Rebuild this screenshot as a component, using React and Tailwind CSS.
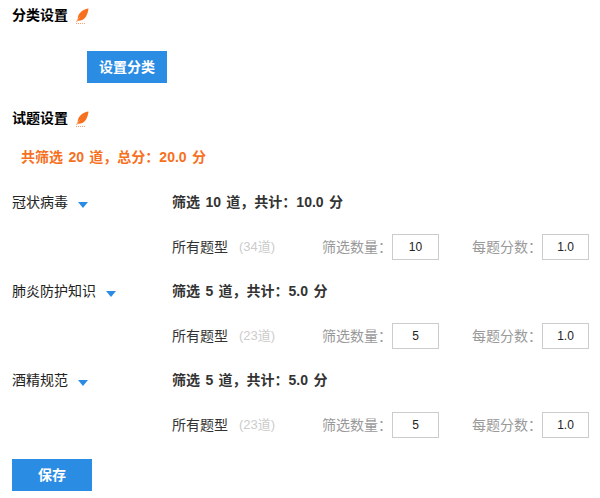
import React from 'react';

const Feather = () => (
  <svg width="14" height="16" viewBox="0 0 14 16" className="ml-[7px] mt-[2px]">
    <path d="M13.5 0.5 C9 1.2 5 3.8 3.4 7.4 C2.6 9.4 2.5 11 2.8 12.8 C6 13 9.4 11.6 11.2 8.2 C12.4 5.8 13.2 3 13.5 0.5 Z" fill="#f7701d" />
    <path d="M1.6 14 C2.4 12 3.4 10.4 5 8.8" stroke="#fb9a5c" strokeWidth="1" fill="none" />
    <path d="M1 15.5 H11" stroke="#f9a06b" strokeWidth="1" strokeDasharray="1 1" />
  </svg>
);

const Caret = () => (
  <span className="ml-[10px] mt-[8px] w-0 h-0 border-x-[5px] border-x-transparent border-t-[6px] border-t-[#2b8ce4]" />
);

const categories = [
  { name: '冠状病毒', count: 10, score: '10.0', total: 34 },
  { name: '肺炎防护知识', count: 5, score: '5.0', total: 23 },
  { name: '酒精规范', count: 5, score: '5.0', total: 23 },
];

const SectionTitle = ({ children }) => (
  <div className="flex items-center h-[16px] text-[14px] font-bold text-black">
    {children}
    <Feather />
  </div>
);

const BoxInput = ({ value }) => (
  <div className="w-[47px] h-[26px] border border-[#ccc] flex items-center justify-center text-[12px] text-[#222]">
    {value}
  </div>
);

const App = () => {
  return (
    <div
      className="w-[600px] h-[498px] bg-white overflow-hidden pl-3 pt-[7px]"
      style={{ fontFamily: '"Liberation Sans", "Noto Sans CJK SC", sans-serif' }}
    >
      <SectionTitle>分类设置</SectionTitle>
      <button className="block ml-[75px] mt-[28px] w-[80px] h-[32px] bg-[#2b8ce4] text-white text-[14px] font-bold">
        设置分类
      </button>
      <div className="mt-[27px]">
        <SectionTitle>试题设置</SectionTitle>
      </div>
      <div className="ml-[9px] mt-[23px] text-[14px] leading-[16px] font-bold text-[#f7701d] [word-spacing:1.5px]">
        共筛选 20 道，总分：20.0 分
      </div>
      <div className="mt-[21px]">
        {categories.map((c) => (
          <div key={c.name} className="h-[89px] flex">
            <div className="w-[160px] flex items-start pt-[8px] text-[14px] leading-[16px] text-[#222]">
              {c.name}
              <Caret />
            </div>
            <div className="flex-1">
              <div className="pt-[8px] text-[14px] leading-[16px] font-bold text-[#333] [word-spacing:1.5px]">
                筛选 {c.count} 道，共计：{c.score} 分
              </div>
              <div className="mt-[24px] flex items-center h-[26px]">
                <span className="text-[14px] text-[#333] w-[67px]">所有题型</span>
                <span className="text-[13px] text-[#ccc] w-[83px]">({c.total}道)</span>
                <span className="text-[14px] text-[#999] w-[70px]">筛选数量：</span>
                <BoxInput value={c.count} />
                <span className="ml-[33px] text-[14px] text-[#999] w-[70px]">每题分数：</span>
                <BoxInput value="1.0" />
              </div>
            </div>
          </div>
        ))}
      </div>
      <button className="block w-[80px] h-[32px] mt-[6px] bg-[#2b8ce4] text-white text-[14px] font-bold">
        保存
      </button>
    </div>
  );
};

export default App;
